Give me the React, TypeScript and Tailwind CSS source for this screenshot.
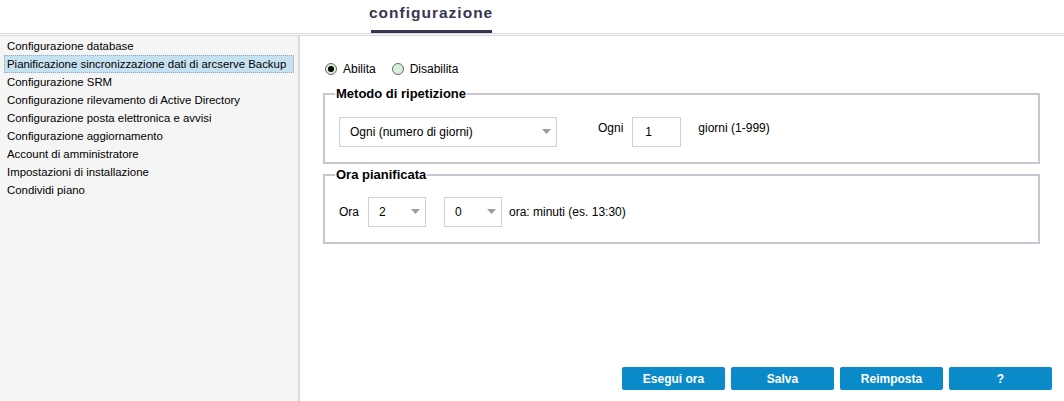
const menuItems = [
  "Configurazione database",
  "Pianificazione sincronizzazione dati di arcserve Backup",
  "Configurazione SRM",
  "Configurazione rilevamento di Active Directory",
  "Configurazione posta elettronica e avvisi",
  "Configurazione aggiornamento",
  "Account di amministratore",
  "Impostazioni di installazione",
  "Condividi piano",
];

function Caret() {
  return (
    <svg width="9" height="5" viewBox="0 0 9 5" className="shrink-0">
      <path d="M0 0h9L4.5 5z" fill="#9a9ca4" />
    </svg>
  );
}

function Select({ value, className }: { value: string; className: string }) {
  return (
    <div
      className={
        "flex items-center justify-between border border-[#cfcfd4] bg-white pl-[10px] pr-[5px] h-[30px] " +
        className
      }
    >
      <span>{value}</span>
      <Caret />
    </div>
  );
}

function Radio({ checked, label }: { checked: boolean; label: string }) {
  return (
    <label className="flex items-center gap-[6px]">
      <span className="flex items-center justify-center w-[12px] h-[12px] rounded-full border border-[#6a6a6a] bg-[#d6f0d6]">
        {checked && <span className="w-[6px] h-[6px] rounded-full bg-black" />}
      </span>
      <span>{label}</span>
    </label>
  );
}

function Group({ title, children, className }: { title: string; children: React.ReactNode; className: string }) {
  return (
    <fieldset className={"border-2 border-[#c8c6d0] px-[14px] mx-0 " + className}>
      <legend className="px-[1px] -ml-[4px] font-bold text-[13px] text-black">{title}</legend>
      {children}
    </fieldset>
  );
}

export default function App() {
  return (
    <div className="w-[1064px] h-[401px] bg-white flex flex-col overflow-hidden font-['Liberation_Sans',sans-serif] text-[12px] text-black">
      <header className="h-[36px] flex border-b-[3px] border-double border-[#d4d8de] pl-[369px]">
        <div className="h-[33px] flex flex-col items-center justify-end">
          <h1 className="text-[15.5px] font-bold tracking-[1px] text-[#3a3550] leading-[20px] pb-[7px]">
            configurazione
          </h1>
          <div className="h-[3px] w-[121px] bg-[#3a3550]" />
        </div>
      </header>
      <div className="flex flex-1">
        <nav className="w-[300px] bg-[#f5f5f5] border-r-2 border-[#d8dbe0] pt-[1px] pl-[4px] text-[11.4px]">
          {menuItems.map((item, i) => (
            <div
              key={item}
              className={
                "h-[18px] leading-[16px] px-[2px] w-[290px] whitespace-nowrap " +
                (i === 1 ? "bg-[#c6e2f2] border border-dotted border-[#9ab]" : "border border-transparent")
              }
            >
              {item}
            </div>
          ))}
        </nav>
        <main className="flex-1 flex flex-col pl-[23px] pr-[24px] pt-[24px] pb-[11px]">
          <div className="flex items-center gap-[16px] pl-[2px]">
            <Radio checked label="Abilita" />
            <Radio checked={false} label="Disabilita" />
          </div>
          <Group title="Metodo di ripetizione" className="mt-[6px] h-[80px]">
            <div className="flex items-start mt-[13px]">
              <Select value="Ogni (numero di giorni)" className="w-[218px]" />
              <span className="ml-[41px] mt-[2px]">Ogni</span>
              <div className="ml-[9px] w-[49px] h-[30px] border border-[#cfcfd4] flex items-center pl-[12px]">1</div>
              <span className="ml-[17px] mt-[2px]">giorni (1-999)</span>
            </div>
          </Group>
          <Group title="Ora pianificata" className="mt-[1px] h-[79px]">
            <div className="flex items-center mt-[12px]">
              <span>Ora</span>
              <Select value="2" className="w-[58px] ml-[9px]" />
              <Select value="0" className="w-[58px] ml-[18px]" />
              <span className="ml-[7px]">ora: minuti (es. 13:30)</span>
            </div>
          </Group>
          <div className="mt-auto flex justify-end gap-[6px] -mr-[12px]">
            {["Esegui ora", "Salva", "Reimposta", "?"].map((b) => (
              <button
                key={b}
                className="w-[103px] h-[23px] bg-[#0a8ac8] text-white font-bold text-[12px] rounded-[2px]"
              >
                {b}
              </button>
            ))}
          </div>
        </main>
      </div>
    </div>
  );
}
